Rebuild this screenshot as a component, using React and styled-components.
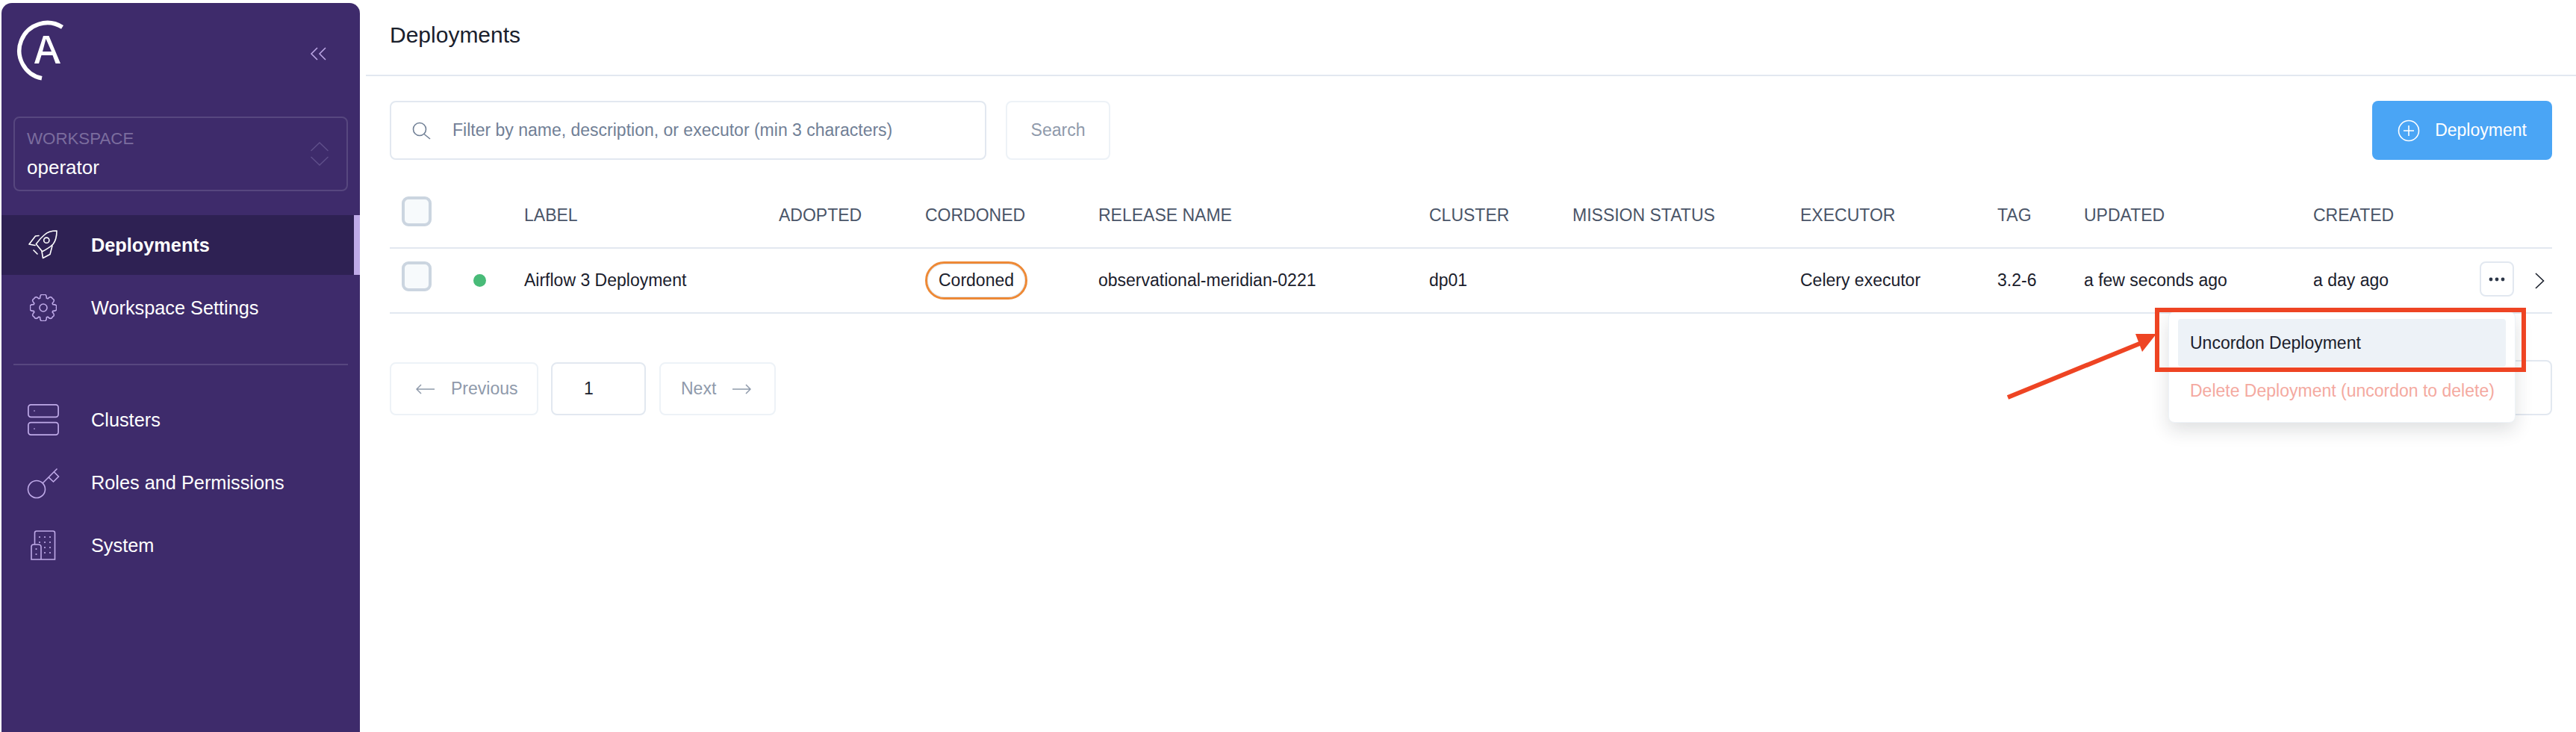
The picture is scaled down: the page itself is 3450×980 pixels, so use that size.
import styled, { createGlobalStyle } from 'styled-components';

const GlobalStyle = createGlobalStyle`
  * { box-sizing: border-box; }
  html, body { margin: 0; padding: 0; background: #fff; }
  body {
    font-family: "Liberation Sans", Arial, sans-serif;
    color: #1a202c;
    overflow: hidden;
  }
`;

const Page = styled.div`
  position: relative;
  display: flex;
  width: 3450px;
  height: 980px;
  overflow: hidden;
`;

const Sidebar = styled.aside`
  flex: 0 0 480px;
  margin: 4px 0 0 2px;
  background: #3e2b6b;
  border-radius: 14px 14px 0 0;
  color: #fff;
`;

const SidebarTop = styled.div`
  display: flex;
  justify-content: space-between;
  height: 152px;
  padding: 20px 45px 0 17px;
`;

const Collapse = styled.svg`
  width: 22px;
  height: 18px;
  margin-top: 39px;
`;

const WorkspaceBox = styled.div`
  display: flex;
  align-items: center;
  justify-content: space-between;
  height: 100px;
  margin: 0 16px;
  padding: 0 24px 0 16px;
  border: 2px solid #57477f;
  border-radius: 8px;
`;

const WorkspaceLabel = styled.div`
  font-size: 22.3px;
  line-height: 26px;
  color: #7b6d9e;
`;

const WorkspaceName = styled.div`
  font-size: 26px;
  line-height: 30px;
  margin-top: 10px;
`;

const NavList = styled.nav`
  margin-top: ${(p) => p.$top}px;
`;

const NavItem = styled.div`
  display: flex;
  align-items: center;
  height: ${(p) => (p.$active ? 80 : 84)}px;
  margin-top: ${(p) => (p.$afterActive ? 2 : 0)}px;
  padding-left: 33px;
  font-size: 25.3px;
  font-weight: ${(p) => (p.$active ? 700 : 400)};
  background: ${(p) => (p.$active ? '#2e2153' : 'transparent')};
  border-right: ${(p) => (p.$active ? '8px solid #bfaae8' : 'none')};
`;

const NavIcon = styled.span`
  display: flex;
  justify-content: center;
  width: 46px;
  margin-right: 41px;
`;

const Divider = styled.hr`
  height: 2px;
  margin: 33px 16px 31px;
  border: 0;
  background: #57477f;
`;

const Main = styled.main`
  flex: 1;
  margin-left: 8px;
  min-width: 0;
`;

const TopBar = styled.header`
  display: flex;
  align-items: center;
  height: 102px;
  padding: 0 32px 6px;
  border-bottom: 2px solid #e2e8f0;
  font-size: 30px;
`;

const Content = styled.div`
  padding: 33px 32px 0;
`;

const Toolbar = styled.div`
  display: flex;
  align-items: stretch;
  height: 79px;
`;

const SearchField = styled.div`
  display: flex;
  align-items: center;
  width: 799px;
  padding-left: 28px;
  border: 2px solid #e2e8f0;
  border-radius: 8px;
  font-size: 23px;
  color: #718096;
`;

const SearchIcon = styled.svg`
  width: 26px;
  height: 24px;
  margin-right: 28px;
`;

const SearchButton = styled.div`
  display: flex;
  align-items: center;
  justify-content: center;
  width: 140px;
  margin-left: 26px;
  border: 2px solid #edf2f7;
  border-radius: 8px;
  font-size: 23px;
  color: #8f9aab;
`;

const AddButton = styled.div`
  display: flex;
  align-items: center;
  justify-content: center;
  gap: 20px;
  width: 241px;
  margin-left: auto;
  background: #4aa5f5;
  border-radius: 8px;
  font-size: 23px;
  color: #fff;
`;

const columns = '112px 68px 341px 196px 232px 443px 192px 305px 264px 116px 307px 223px 97px';

const Row = styled.div`
  display: grid;
  grid-template-columns: ${columns};
  align-items: center;
  height: 87px;
  margin-top: ${(p) => (p.$head ? 32 : 0)}px;
  border-bottom: 2px solid #e2e8f0;
  font-size: 23px;
  color: ${(p) => (p.$head ? '#4a5568' : '#1a202c')};
`;

const Check = styled.div`
  width: 40px;
  height: 40px;
  margin: 0 0 11px 16px;
  background: #f7fafc;
  border: 4px solid #cbd5e0;
  border-radius: 9px;
`;

const StatusDot = styled.div`
  width: 17px;
  height: 17px;
  border-radius: 50%;
  background: #48bb78;
`;

const Pill = styled.div`
  display: flex;
  align-items: center;
  justify-content: center;
  width: 137px;
  height: 51px;
  border: 3px solid #ed8936;
  border-radius: 26px;
  box-shadow: inset 0 0 0 1px #e2e8f0;
`;

const Actions = styled.div`
  position: relative;
  display: flex;
  align-items: center;
  justify-content: space-between;
  align-self: stretch;
  padding-right: 10px;
`;

const MoreButton = styled.div`
  display: flex;
  align-items: center;
  justify-content: center;
  width: 46px;
  height: 47px;
  margin-bottom: 4px;
  border: 2px solid #e2e8f0;
  border-radius: 8px;
`;

const Menu = styled.div`
  position: absolute;
  top: 84px;
  right: 49px;
  width: 465px;
  height: 149px;
  padding: 9px 12px;
  background: #fff;
  border: 1px solid #edf2f7;
  border-radius: 8px;
  box-shadow: 0 10px 24px rgba(26, 32, 44, 0.14);
  z-index: 2;
`;

const MenuItem = styled.div`
  display: flex;
  align-items: center;
  height: 64px;
  padding-left: 16px;
  border-radius: 4px;
  background: ${(p) => (p.$selected ? '#edf2f7' : 'transparent')};
  color: ${(p) => (p.$danger ? '#f4a9a0' : '#1a202c')};
  white-space: nowrap;
`;

const Pager = styled.div`
  display: flex;
  align-items: stretch;
  height: 71px;
  margin-top: 65px;
  font-size: 23px;
`;

const PageButton = styled.div`
  display: flex;
  align-items: center;
  gap: 22px;
  width: ${(p) => p.$w}px;
  margin-right: ${(p) => p.$gap}px;
  padding-left: ${(p) => p.$pad}px;
  border: 2px solid ${(p) => (p.$current ? '#e2e8f0' : '#edf2f7')};
  border-radius: 8px;
  color: ${(p) => (p.$current ? '#1a202c' : '#8f9aab')};
`;

const PageSize = styled.div`
  width: 200px;
  margin: -3px 0 0 auto;
  border: 2px solid #e2e8f0;
  border-radius: 8px;
`;

const Annotation = styled.svg`
  position: absolute;
  left: 2680px;
  top: 405px;
  width: 710px;
  height: 135px;
  z-index: 3;
  pointer-events: none;
`;

const lilac = '#bfaae8';

const Logo = () => (
  <svg width="70" height="90" viewBox="19 24 70 90" fill="none">
    <path d="M83.5 36.4A37.5 37.5 0 1 0 56 104.8" stroke="#fff" strokeWidth="5.5" />
    <path d="M58 48h7.5L81 85h-6.5l-4-11H55.5l-3.5 11h-6zM57 69h12L61.5 52z" fill="#fff" fillRule="evenodd" />
  </svg>
);

const RocketIcon = () => (
  <svg width="40" height="40" viewBox="0 0 40 40" fill="none" stroke="#fff" strokeWidth="1.6" strokeLinejoin="round" strokeLinecap="round">
    <path d="M38 1C31 1 26 2 22 6 17 10 13 15 10.3 18.7L18.7 28.7C24 26 29 23 33 19 37 14 38 8 38 1Z" />
    <path d="M14 7.5 9.5 8 1 19 9 20.5" />
    <path d="M18 28.5 19.5 37.5 29 32.5 32 21" />
    <circle cx="24.3" cy="13.7" r="3.6" />
    <path d="M7 27 12 32" />
  </svg>
);

const cogPath = (() => {
  const teeth = 8;
  const pts = [];
  for (let i = 0; i < teeth; i += 1) {
    const step = (Math.PI * 2) / teeth;
    const a = i * step - Math.PI / 2;
    const p = (r, t) => `${(18 + r * Math.cos(a + t)).toFixed(2)} ${(18 + r * Math.sin(a + t)).toFixed(2)}`;
    pts.push(`${i === 0 ? 'M' : 'L'}${p(13.5, -step * 0.42)} Q${p(19.5, -step * 0.3)} ${p(17.4, 0)} Q${p(19.5, step * 0.3)} ${p(13.5, step * 0.42)}`);
  }
  return `${pts.join(' ')}Z`;
})();

const GearIcon = () => (
  <svg width="36" height="36" viewBox="0 0 36 36" fill="none" stroke={lilac} strokeWidth="1.6">
    <path d={cogPath} strokeLinejoin="round" />
    <circle cx="18" cy="18" r="5" />
  </svg>
);

const ClusterIcon = () => (
  <svg width="42" height="42" viewBox="0 0 42 42" fill="none" stroke={lilac} strokeWidth="1.7">
    <rect x="0.9" y="0.9" width="40.2" height="16.4" rx="3.5" />
    <rect x="0.9" y="24.7" width="40.2" height="16.4" rx="3.5" />
    <circle cx="9" cy="9" r="0.6" fill={lilac} strokeWidth="0.5" />
    <circle cx="9" cy="33" r="0.6" fill={lilac} strokeWidth="0.5" />
  </svg>
);

const KeyIcon = () => (
  <svg width="44" height="44" viewBox="0 0 44 44" fill="none" stroke={lilac} strokeWidth="1.6">
    <circle cx="13" cy="31" r="11.5" />
    <path d="M21 23 40.5 3.5" />
    <path d="M29 14.8 35.5 21 42.5 14 36 7.5" />
  </svg>
);

const buildingDots = [
  [12, 9], [19, 9], [26, 9], [12, 16], [19, 16], [26, 16],
  [19, 23], [26, 23], [19, 30], [26, 30],
];

const BuildingIcon = () => (
  <svg width="34" height="40" viewBox="0 0 34 40" fill="none" stroke={lilac} strokeWidth="1.6">
    <path d="M5.5 19V3.5Q5.5 1 8 1H30Q32.5 1 32.5 3.5V39H1V22Q1 19 4 19H10Q14 19 14 22V39" />
    {buildingDots.map(([x, y]) => (
      <circle key={`${x}-${y}`} cx={x} cy={y} r="1.1" fill={lilac} stroke="none" />
    ))}
    <circle cx="7.5" cy="25" r="1.1" fill={lilac} stroke="none" />
    <circle cx="7.5" cy="32" r="1.1" fill={lilac} stroke="none" />
  </svg>
);

const ArrowIcon = ({ flip }) => (
  <svg width="25" height="14" viewBox="0 0 25 14" fill="none" stroke="#8f9aab" strokeWidth="1.5">
    {flip ? <path d="M25 7H1M7 1 1 7l6 6" /> : <path d="M0 7h24M18 1l6 6-6 6" />}
  </svg>
);

const headers = ['LABEL', 'ADOPTED', 'CORDONED', 'RELEASE NAME', 'CLUSTER', 'MISSION STATUS', 'EXECUTOR', 'TAG', 'UPDATED', 'CREATED'];

const App = () => (
  <Page>
    <GlobalStyle />
    <Sidebar>
      <SidebarTop>
        <Logo />
        <Collapse viewBox="0 0 22 18" fill="none" stroke={lilac} strokeWidth="1.5">
          <path d="M10 1 2 9l8 8M21 1l-8 8 8 8" />
        </Collapse>
      </SidebarTop>
      <WorkspaceBox>
        <div>
          <WorkspaceLabel>WORKSPACE</WorkspaceLabel>
          <WorkspaceName>operator</WorkspaceName>
        </div>
        <svg width="24" height="32" viewBox="0 0 24 32" fill="none" stroke="#5f4f8a" strokeWidth="1.5">
          <path d="M0.5 12 12 1l11.5 11M0.5 20 12 31l11.5-11" />
        </svg>
      </WorkspaceBox>
      <NavList $top={32}>
        <NavItem $active>
          <NavIcon><RocketIcon /></NavIcon>
          Deployments
        </NavItem>
        <NavItem $afterActive>
          <NavIcon><GearIcon /></NavIcon>
          Workspace Settings
        </NavItem>
      </NavList>
      <Divider />
      <NavList $top={0}>
        <NavItem>
          <NavIcon><ClusterIcon /></NavIcon>
          Clusters
        </NavItem>
        <NavItem>
          <NavIcon><KeyIcon /></NavIcon>
          Roles and Permissions
        </NavItem>
        <NavItem>
          <NavIcon><BuildingIcon /></NavIcon>
          System
        </NavItem>
      </NavList>
    </Sidebar>
    <Main>
      <TopBar>Deployments</TopBar>
      <Content>
        <Toolbar>
          <SearchField>
            <SearchIcon viewBox="0 0 26 24" fill="none" stroke="#718096" strokeWidth="1.6">
              <circle cx="10" cy="10" r="8.5" />
              <path d="M16 16.5 24 23" />
            </SearchIcon>
            Filter by name, description, or executor (min 3 characters)
          </SearchField>
          <SearchButton>Search</SearchButton>
          <AddButton>
            <svg width="30" height="30" viewBox="0 0 30 30" fill="none" stroke="#fff" strokeWidth="1.6">
              <circle cx="15" cy="15" r="13.5" />
              <path d="M15 8v14M8 15h14" />
            </svg>
            Deployment
          </AddButton>
        </Toolbar>
        <Row $head>
          <Check />
          <span />
          {headers.map((h) => (
            <span key={h}>{h}</span>
          ))}
        </Row>
        <Row>
          <Check />
          <StatusDot />
          <span>Airflow 3 Deployment</span>
          <span />
          <Pill>Cordoned</Pill>
          <span>observational-meridian-0221</span>
          <span>dp01</span>
          <span />
          <span>Celery executor</span>
          <span>3.2-6</span>
          <span>a few seconds ago</span>
          <span>a day ago</span>
          <Actions>
            <MoreButton>
              <svg width="24" height="6" viewBox="0 0 24 6" fill="#2d3748">
                <circle cx="4" cy="3" r="2.4" />
                <circle cx="12" cy="3" r="2.4" />
                <circle cx="20" cy="3" r="2.4" />
              </svg>
            </MoreButton>
            <svg width="13" height="22" viewBox="0 0 13 22" fill="none" stroke="#1a202c" strokeWidth="1.6">
              <path d="M1 1l10.5 10L1 21" />
            </svg>
            <Menu>
              <MenuItem $selected>Uncordon Deployment</MenuItem>
              <MenuItem $danger>Delete Deployment (uncordon to delete)</MenuItem>
            </Menu>
          </Actions>
        </Row>
        <Pager>
          <PageButton $w={199} $gap={17} $pad={33}>
            <ArrowIcon flip />
            Previous
          </PageButton>
          <PageButton $w={127} $gap={18} $pad={42} $current>1</PageButton>
          <PageButton $w={156} $gap={0} $pad={27}>
            Next
            <ArrowIcon />
          </PageButton>
          <PageSize />
        </Pager>
      </Content>
    </Main>
    <Annotation viewBox="2680 405 710 135" fill="none">
      <rect x="2889" y="415" width="491" height="80" stroke="#ee4423" strokeWidth="6" />
      <path d="M2689 532 2868 459" stroke="#ee4423" strokeWidth="6" />
      <path d="M2888 447 2860 447 2869 471Z" fill="#ee4423" />
    </Annotation>
  </Page>
);

export default App;
